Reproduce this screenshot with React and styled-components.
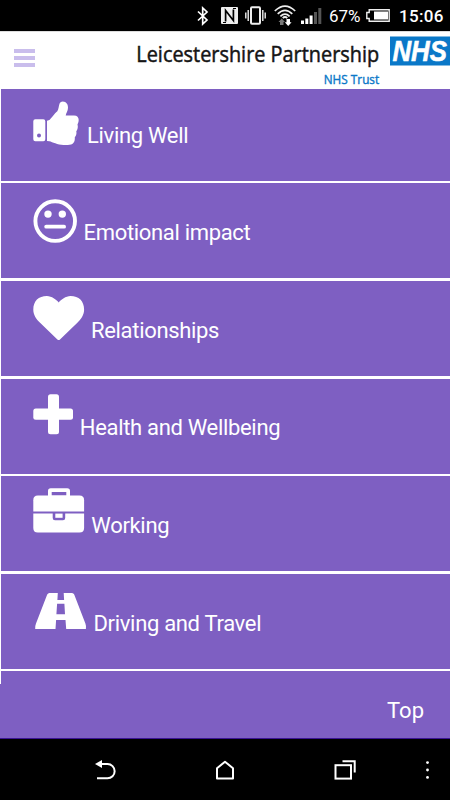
import React from "react";
import styled, { createGlobalStyle } from "styled-components";

const colors = {
  purple: "#7e5fc2",
  lilac: "#c9bdec",
  nhsBlue: "#0a78c8",
};

const GlobalStyle = createGlobalStyle`
  * {
    box-sizing: border-box;
  }
  body {
    margin: 0;
    background: #000;
    font-family: Roboto, "Liberation Sans", sans-serif;
  }
  svg {
    display: block;
    flex: none;
    overflow: visible;
  }
`;

/* ---------- status bar ---------- */

const Bluetooth = () => (
  <svg width="12" height="20" fill="none" stroke="#fff" strokeWidth="1.7">
    <path d="M1 5.5 L10 14 L5.7 18 V2 L10 6 L1 14.5" />
  </svg>
);

const Nfc = () => (
  <svg width="17" height="17">
    <rect width="17" height="17" rx="1" fill="#eee" />
    <path
      d="M4.6 14.5 V3.5 L12.4 13.5 V2.5"
      fill="none"
      stroke="#000"
      strokeWidth="1.7"
    />
    <path d="M2 15.5 H5 M12 1.5 H15" stroke="#000" strokeWidth="1" />
  </svg>
);

const Vibrate = () => (
  <svg width="21" height="19" fill="none" stroke="#eee">
    <rect x="6" y="1.2" width="9" height="16.6" rx="1" strokeWidth="2" />
    <path
      d="M3.2 4 V15 M17.8 4 V15 M.8 6.5 V12.5 M20.2 6.5 V12.5"
      strokeWidth="1.4"
    />
  </svg>
);

const Wifi = () => (
  <svg width="22" height="21" fill="none" stroke="#eee" strokeWidth="1.7">
    <path d="M.8 6 Q11 -3.8 21.2 6" />
    <path d="M3.7 8.8 Q11 1.8 18.3 8.8" />
    <path d="M6.4 11.4 Q11 7 15.6 11.4" />
    <path d="M8.7 13 Q11 11 13.3 13" />
    <path
      d="M7.7 13.5 L11 17 H9.5 V20 H6 V17 H4.5Z"
      fill="#777"
      stroke="none"
    />
    <path
      d="M14.2 21 L10.8 17.2 H12.5 V14 H16 V17.2 H17.6Z"
      fill="#fff"
      stroke="none"
    />
  </svg>
);

const Signal = () => (
  <svg width="21" height="16" fill="#fff">
    <rect x="0" y="12.5" width="3" height="3.5" />
    <rect x="4.3" y="10.5" width="3" height="5.5" />
    <rect x="8.6" y="7.5" width="3" height="8.5" />
    <rect x="13" y="4" width="3" height="12" fill="#555" />
    <rect x="17.3" y="0" width="3" height="16" fill="#555" />
  </svg>
);

const Battery = () => (
  <svg width="24" height="13">
    <path
      d="M3.2 .8 H23.2 V12.2 H3.2 V9.5 H.8 V3.5 H3.2Z"
      fill="none"
      stroke="#eee"
      strokeWidth="1.4"
    />
    <rect x="8" y="2.5" width="14" height="8" fill="#fff" />
  </svg>
);

const StatusBar = styled.div`
  height: 31px;
  padding-right: 6px;
  display: flex;
  align-items: center;
  justify-content: flex-end;
  background: #000;
  color: #fff;
`;

const StatusIcons = styled.div`
  display: flex;
  align-items: center;
  gap: ${(props) => props.$gap || 0}px;
  margin-left: ${(props) => props.$left || 0}px;
`;

const StatusText = styled.span`
  width: ${(props) => props.$width}px;
  margin-left: ${(props) => props.$left}px;
  padding-top: 1px;
  font-size: 17px;
  font-weight: ${(props) => props.$weight || 400};
  letter-spacing: ${(props) => props.$spacing || 0}px;
  line-height: 24px;
  white-space: nowrap;
`;

/* ---------- page header ---------- */

const Header = styled.header`
  height: 57.7px;
  padding-left: 14px;
  display: flex;
  justify-content: space-between;
  background: #fff;
  border-top: 1px solid #ddd;
`;

const MenuButton = styled.button`
  width: 21px;
  height: 18px;
  margin: 17px 0 0;
  padding: 0;
  border: 0;
  background: none;
  display: flex;
  flex-direction: column;
  justify-content: space-between;
`;

const MenuLine = styled.span`
  height: 3.6px;
  background: ${colors.lilac};
`;

// the wordmark is set slightly condensed
const Logo = () => (
  <svg
    width="315"
    height="56"
    fontFamily='"Open Sans", "Noto Sans", sans-serif'
    role="img"
  >
    <g transform="scale(.88 1)">
      <text
        x="1.5"
        y="30.3"
        fontSize="22"
        fill="#151515"
        stroke="#151515"
        strokeWidth=".5"
        textLength="276"
        lengthAdjust="spacingAndGlyphs"
      >
        Leicestershire Partnership
      </text>
      <text
        x="214.5"
        y="52"
        fontSize="13"
        fill={colors.nhsBlue}
        stroke={colors.nhsBlue}
        strokeWidth=".4"
        textLength="63"
        lengthAdjust="spacingAndGlyphs"
      >
        NHS Trust
      </text>
    </g>
    <rect x="255" y="4.5" width="60" height="29" fill={colors.nhsBlue} />
    <g transform="scale(.9 1)">
      <text
        x="286"
        y="29.5"
        fontFamily='"Liberation Sans", Arial, sans-serif'
        fontSize="30"
        fontWeight="700"
        fontStyle="italic"
        fill="#fff"
        stroke="#fff"
        strokeWidth=".6"
        textLength="60.5"
        lengthAdjust="spacingAndGlyphs"
      >
        NHS
      </text>
    </g>
  </svg>
);

/* ---------- menu icons ---------- */

const ThumbsUp = () => (
  <svg width="54" height="48" fill="#fff">
    <path
      fillRule="evenodd"
      d="M2.3 20.2 H10.3 Q12.3 20.2 12.3 22.2 V40.2 Q12.3 42.2 10.3 42.2 H2.3 Q.3 42.2 .3 40.2 V22.2 Q.3 20.2 2.3 20.2Z M6 34.6 A2 2 0 1 0 6 38.6 A2 2 0 1 0 6 34.6Z"
    />
    <path d="M14 21.8 Q17 21.2 19.5 17.4 Q22 14 24.3 12.3 C25.8 10.6 25.6 6.6 26.7 4.3 Q27.5 2.6 29.7 2.6 C33.5 2.9 35 5.4 35 8.8 C35 12 33 14 32.7 16.6 H41 C44.2 16.6 45.7 18.7 45.7 21 Q45.7 23.6 44.5 25.6 C45.2 28 44.8 30.4 43.3 32.2 C43.8 34.5 43.2 36.7 41.8 38.3 C42.2 43.5 39.8 46 34.8 46 H30.5 C24.5 46 19.5 43 16.3 42.3 L14 42Z" />
  </svg>
);

const NeutralFace = () => (
  <svg width="50.5" height="48" fill="#fff">
    <circle
      cx="22.2"
      cy="24.1"
      r="19.8"
      fill="none"
      stroke="#fff"
      strokeWidth="3.9"
    />
    <circle cx="15" cy="17.1" r="3.7" />
    <circle cx="29.3" cy="17.1" r="3.7" />
    <rect x="11.3" y="27.8" width="21.7" height="3.8" rx="1.9" />
  </svg>
);

const Heart = () => (
  <svg width="58" height="48" fill="#fff">
    <path d="M25.7 46.1 Q25 46.1 24.4 45.5 L6.8 28.5 C3.5 25.3 .3 21 .3 15.7 C.3 7.2 5.5 2.1 13.9 2.1 C18.7 2.1 23.2 5.9 25.7 8.4 C28.2 5.9 32.7 2.1 37.5 2.1 C45.9 2.1 51.1 7.2 51.1 15.7 C51.1 21 47.8 25.3 44.6 28.5 L27 45.5 Q26.4 46.1 25.7 46.1Z" />
  </svg>
);

const Plus = () => (
  <svg width="46.8" height="48" fill="#fff">
    <rect x="15" y="2.2" width="11" height="40" rx="2.5" />
    <rect x=".3" y="16.6" width="39.7" height="11.2" rx="2.5" />
  </svg>
);

const Briefcase = () => (
  <svg width="58.3" height="48" fill="#fff">
    <path
      fillRule="evenodd"
      d="M15 6 V1 Q15 -1.7 17.7 -1.7 H34.2 Q37 -1.7 37 1 V6Z M18.7 5.6 H33.3 V1.9 H18.7Z"
    />
    <path d="M4.8 5.6 H46.5 Q51.1 5.6 51.1 10.2 V21.4 H.3 V10.2 Q.3 5.6 4.8 5.6Z" />
    <path d="M.3 23.6 H19.7 V28 Q19.7 30.2 22 30.2 H30 Q32.2 30.2 32.2 28 V23.6 H51.1 V38 Q51.1 42.6 46.5 42.6 H4.8 Q.3 42.6 .3 38Z" />
    <rect x="22.3" y="23.6" width="7.3" height="4.2" />
  </svg>
);

const Road = () => (
  <svg width="60.5" height="48" fill="#fff">
    <path
      fillRule="evenodd"
      d="M16.4 6 H24.8 L24.4 13 H31.1 L30.7 6 H39 Q40.5 6 41.2 7.5 L52.4 36.5 Q53.5 39.5 52.9 42 H33.2 L32.5 33 H23.1 L22.5 42 H2.2 Q1.8 39.5 3 36.5 L14.2 7.5 Q15 6 16.4 6Z M24.1 16.7 L23.4 27.3 H32 L31.4 16.7Z"
    />
  </svg>
);

/* ---------- menu ---------- */

const Page = styled.div`
  width: 450px;
  height: 800px;
  overflow: hidden;
  display: flex;
  flex-direction: column;
`;

const Menu = styled.nav`
  height: 595.3px;
  overflow: hidden;
  padding-left: 1px;
  display: flex;
  flex-direction: column;
  gap: 2.6px;
  background: #fff;
`;

const MenuItem = styled.a`
  flex: none;
  height: ${(props) => (props.$first ? 92.2 : 95)}px;
  padding: ${(props) => (props.$first ? 10.6 : 13.4)}px 0 0 32px;
  display: flex;
  background: ${colors.purple};
  color: #fff;
`;

const Label = styled.span`
  margin-top: 23.3px;
  font-size: 22px;
  line-height: 26px;
  letter-spacing: -0.32px;
  white-space: nowrap;
`;

const BottomBar = styled.footer`
  height: 55px;
  padding: 14px 26px 0 0;
  text-align: right;
  font-size: 22px;
  line-height: 26px;
  background: ${colors.purple};
  border-bottom: 1px solid #3a1492;
  color: #fff;
`;

const items = [
  { label: "Living Well", Icon: ThumbsUp },
  { label: "Emotional impact", Icon: NeutralFace },
  { label: "Relationships", Icon: Heart },
  { label: "Health and Wellbeing", Icon: Plus },
  { label: "Working", Icon: Briefcase },
  { label: "Driving and Travel", Icon: Road },
];

/* ---------- android navigation ---------- */

const NavBar = styled.div`
  flex: 1;
  padding: 21px 20px 0 95px;
  display: grid;
  grid-template-columns: 120px 119px 91px 5px;
  align-items: start;
  background: #000;
`;

const App = () => {
  return (
    <>
      <GlobalStyle />
      <Page>
        <StatusBar>
          <StatusIcons $gap={12}>
            <Bluetooth />
            <Nfc />
          </StatusIcons>
          <StatusIcons $gap={8} $left={7}>
            <Vibrate />
            <Wifi />
          </StatusIcons>
          <StatusIcons $left={5}>
            <Signal />
          </StatusIcons>
          <StatusText $width={32} $left={7}>
            67%
          </StatusText>
          <StatusIcons $left={5}>
            <Battery />
          </StatusIcons>
          <StatusText $width={45} $left={9} $weight={500} $spacing={0.3}>
            15:06
          </StatusText>
        </StatusBar>

        <Header>
          <MenuButton aria-label="Menu">
            <MenuLine />
            <MenuLine />
            <MenuLine />
          </MenuButton>
          <Logo />
        </Header>

        <Menu>
          {items.map(({ label, Icon }, index) => (
            <MenuItem key={label} $first={index === 0}>
              <Icon />
              <Label>{label}</Label>
            </MenuItem>
          ))}
          <MenuItem />
        </Menu>

        <BottomBar>Top</BottomBar>

        <NavBar>
          <svg width="21" height="20" fill="none" stroke="#fff">
            <path d="M4 4 H12.5 A7 7 0 0 1 12.5 18.3 H2" strokeWidth="2" />
            <path d="M0 4 L7 0 V8Z" fill="#fff" stroke="none" />
          </svg>
          <svg width="20" height="20" fill="none" stroke="#fff">
            <path
              d="M2 18.5 V8.3 L10 1.7 L18 8.3 V18.5Z"
              strokeWidth="2"
              strokeLinejoin="round"
            />
          </svg>
          <svg width="22" height="20" fill="none" stroke="#fff" strokeWidth="2">
            <rect x="1.5" y="5.2" width="15.5" height="13.4" />
            <path d="M8.5 1.3 H20.7 V12.5" />
          </svg>
          <svg width="5" height="20" fill="#fff">
            <circle cx="2.5" cy="2.6" r="1.4" />
            <circle cx="2.5" cy="10" r="1.4" />
            <circle cx="2.5" cy="17.4" r="1.4" />
          </svg>
        </NavBar>
      </Page>
    </>
  );
};

export default App;
